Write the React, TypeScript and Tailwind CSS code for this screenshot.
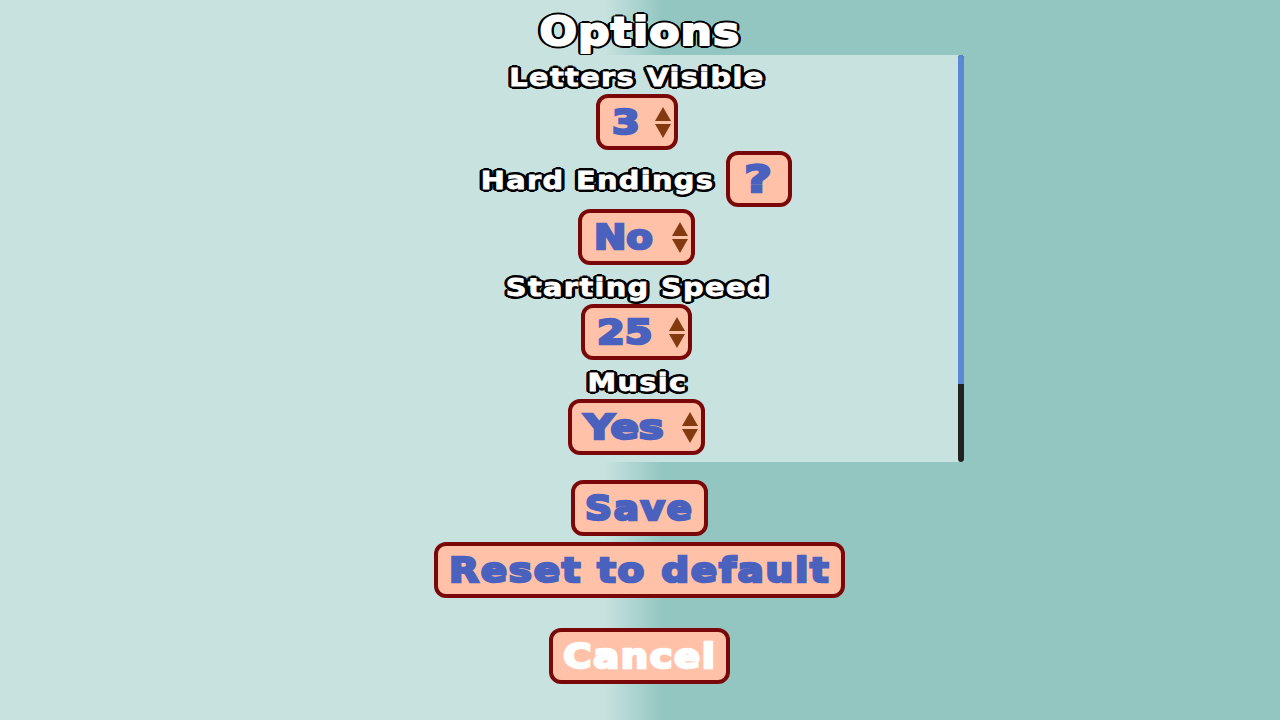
import React from "react";

const font = "font-['DejaVu_Sans',sans-serif] font-bold";
const outlined =
  "text-white [text-shadow:3px_0_0_#000,-3px_0_0_#000,0_3px_0_#000,0_-3px_0_#000,2px_2px_0_#000,-2px_2px_0_#000,2px_-2px_0_#000,-2px_-2px_0_#000,3px_1px_0_#000,-3px_1px_0_#000,3px_-1px_0_#000,-3px_-1px_0_#000]";
const box =
  "flex items-center h-14 rounded-xl border-4 border-[#7b0808] bg-[#ffc2a9] text-[34px] leading-none";
const ink = "text-[#4a62bd] [-webkit-text-stroke:2.5px_#4a62bd]";

function Label({ children, width }: { children: React.ReactNode; width: string }) {
  return (
    <div className={`${font} ${outlined} ${width} flex justify-center whitespace-nowrap text-[25px] leading-[25px] tracking-[1.2px]`}>
      <span className="inline-block scale-x-[1.15] [-webkit-text-stroke:0.8px_#fff]">{children}</span>
    </div>
  );
}

function Arrows() {
  return (
    <svg width="16" height="31" viewBox="0 0 16 31" className="shrink-0" aria-hidden="true">
      <path d="M8 0 L16 14 L0 14 Z" fill="#843a10" />
      <path d="M0 17 L16 17 L8 31 Z" fill="#843a10" />
    </svg>
  );
}

function Select({ value, width, scale }: { value: string; width: string; scale: string }) {
  return (
    <div className={`${box} ${width} ${font} justify-between pl-[12px] pr-[3px]`}>
      <span className={`${ink} ${scale} inline-block origin-left whitespace-nowrap`}>{value}</span>
      <Arrows />
    </div>
  );
}

function Btn({ children, width, scale, white }: { children: React.ReactNode; width: string; scale: string; white?: boolean }) {
  return (
    <div className={`${box} ${width} ${font} justify-center tracking-[1.5px] whitespace-nowrap`}>
      <span
        className={`inline-block ${scale} ${
          white ? "text-white [-webkit-text-stroke:2.5px_#fff]" : ink
        }`}
      >
        {children}
      </span>
    </div>
  );
}

export default function App() {
  return (
    <div className="h-[720px] w-[1280px] overflow-hidden flex flex-col items-center bg-[linear-gradient(90deg,#c8e2df_47.2%,#93c6c1_51.8%)]">
      <div className={`${font} ${outlined} mt-[12px] h-[43px] text-[39px] leading-[40px] tracking-[1px]`}>
        <span className="inline-block scale-x-[1.13] [-webkit-text-stroke:2px_#fff]">Options</span>
      </div>
      <div className="relative w-[648px] h-[407px] bg-[#c8e2df] flex flex-col items-center pr-[6px]">
        <div className="mt-[10px]">
          <Label width="w-[254px]">Letters Visible</Label>
        </div>
        <div className="mt-[4px]">
          <Select value="3" width="w-[82px]" scale="scale-x-[1.17]" />
        </div>
        <div className="flex items-center gap-[11px] mt-[1px] ml-[-1px]">
          <div className="pt-[2px]">
            <Label width="w-[233px]">Hard Endings</Label>
          </div>
          <div className={`${box} w-[66px] ${font} justify-center`}>
            <span className={`${ink} inline-block scale-x-[1.25] text-[38px]`}>?</span>
          </div>
        </div>
        <div className="mt-[2px] ml-[-1px]">
          <Select value="No" width="w-[117px]" scale="scale-x-[1.135]" />
        </div>
        <div className="mt-[10px]">
          <Label width="w-[258px]">Starting Speed</Label>
        </div>
        <div className="mt-[4px] ml-[-1px]">
          <Select value="25" width="w-[111px]" scale="scale-x-[1.17]" />
        </div>
        <div className="mt-[10px]">
          <Label width="w-[98px]">Music</Label>
        </div>
        <div className="mt-[4px] ml-[-1px]">
          <Select value="Yes" width="w-[137px]" scale="scale-x-[1.23]" />
        </div>
        <div className="absolute right-0 top-0 bottom-0 w-[6px] rounded-[3px] bg-[#222222] overflow-hidden">
          <div className="h-[329px] bg-[#5b87d6]" />
        </div>
      </div>
      <div className="mt-[18px] ml-[-1px]">
        <Btn width="w-[137px]" scale="scale-x-[1.1]">Save</Btn>
      </div>
      <div className="mt-[6px] ml-[-1px]">
        <Btn width="w-[411px]" scale="scale-x-[1.144]">Reset to default</Btn>
      </div>
      <div className="mt-[30px] ml-[-1px]">
        <Btn width="w-[181px]" scale="scale-x-[1.127]" white>Cancel</Btn>
      </div>
    </div>
  );
}
